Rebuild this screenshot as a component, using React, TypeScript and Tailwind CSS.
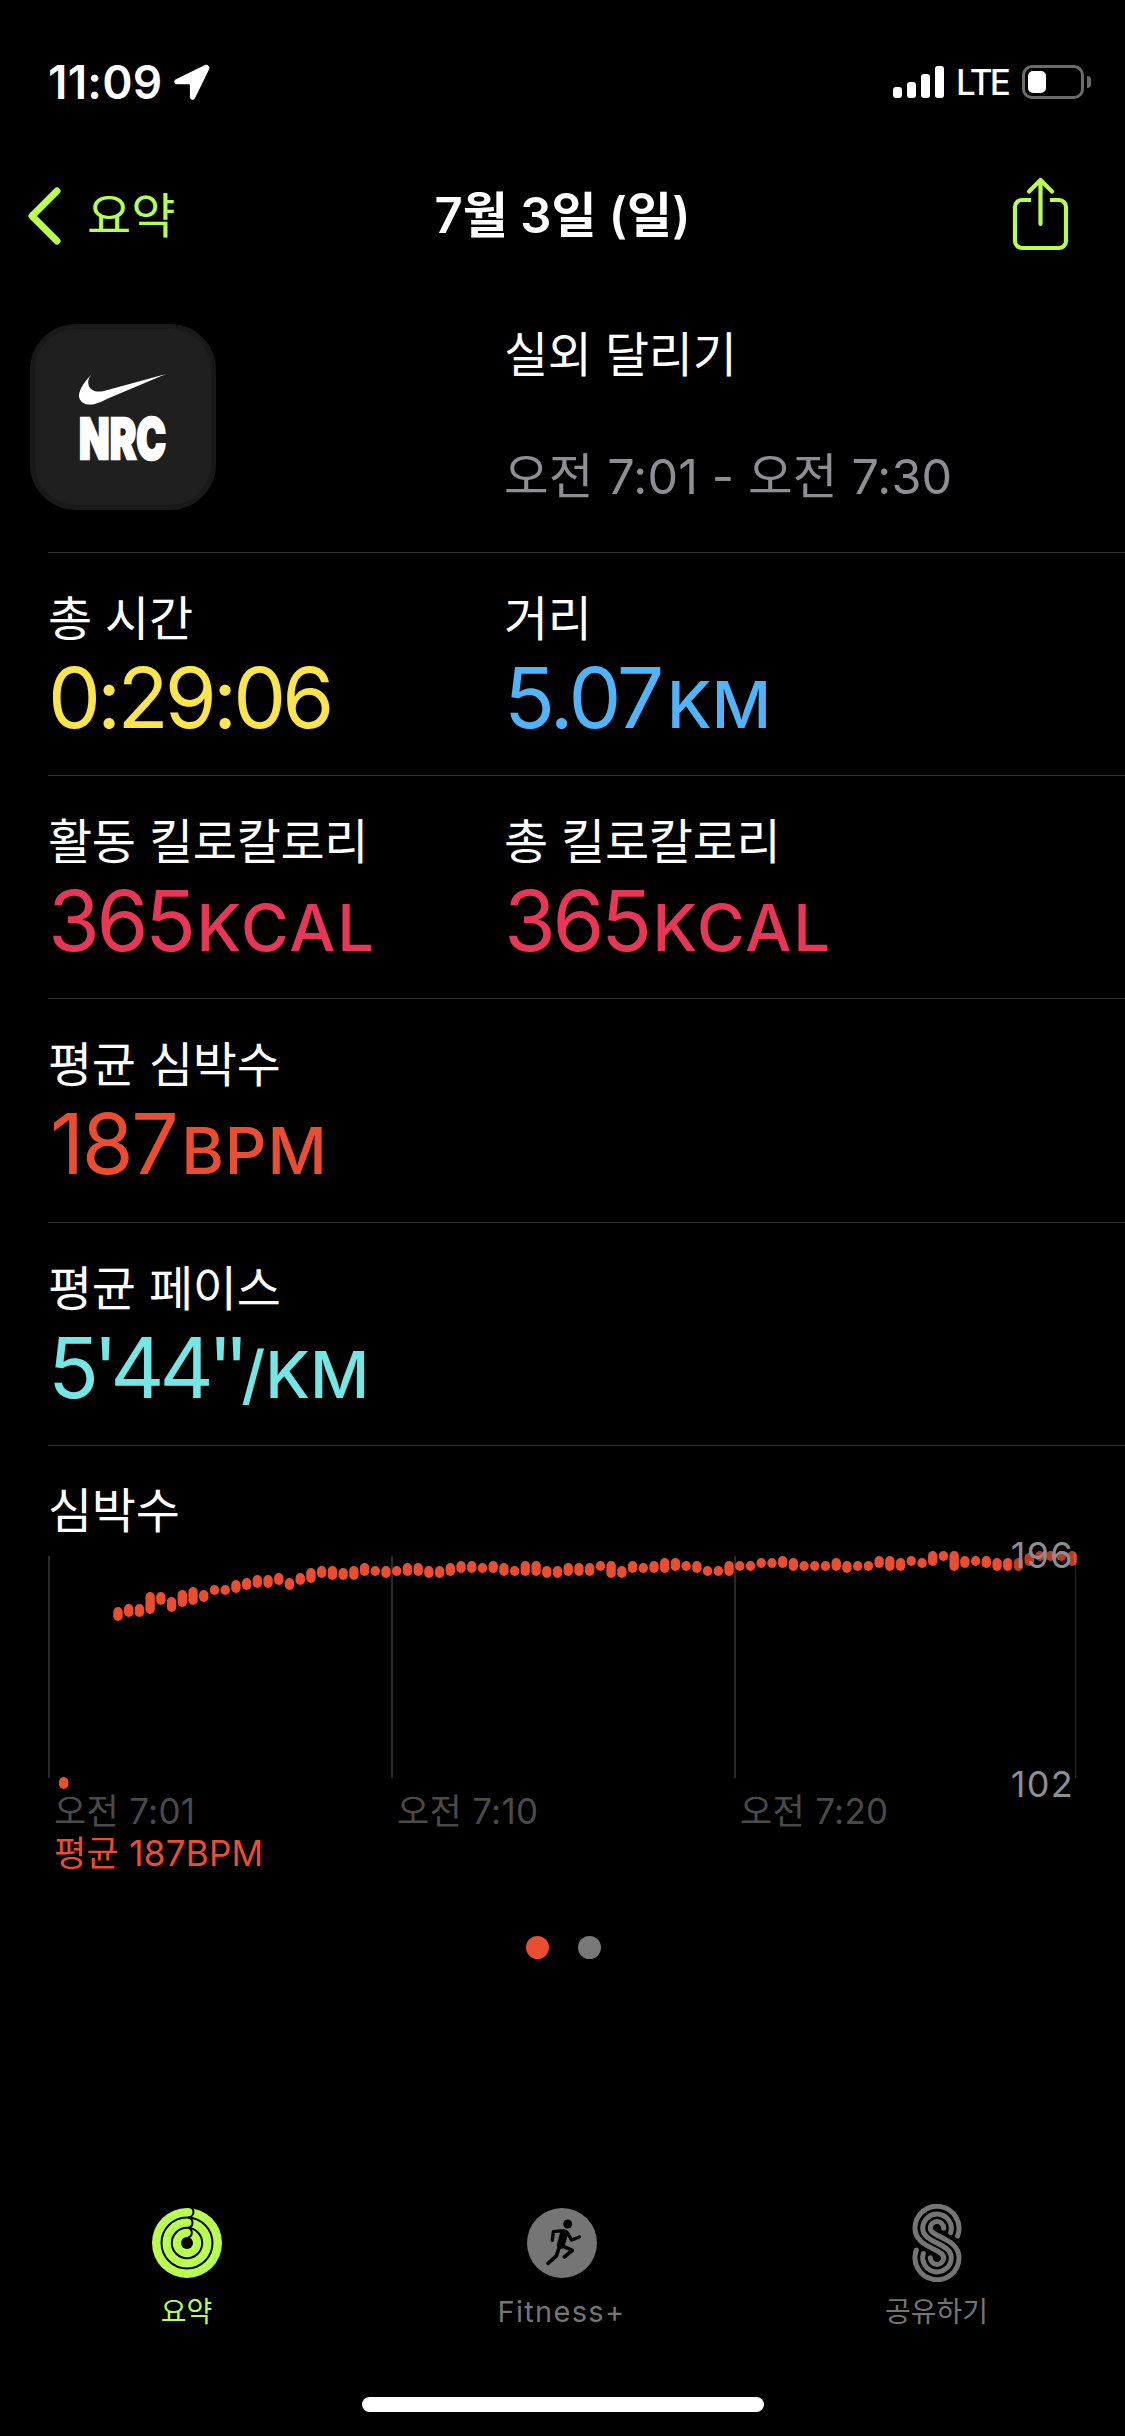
import React from 'react';

type Metric = { label: string; value: string; valueClass: string; unit?: string; unitClass?: string };

const rows: Metric[][] = [
  [
    { label: '총 시간', value: '0:29:06', valueClass: 'tracking-[-3.9px] text-[#fae54f]' },
    { label: '거리', value: '5.07', valueClass: 'tracking-[-3.2px] text-[#51b4fb]', unit: 'KM', unitClass: 'ml-[6px] tracking-normal' },
  ],
  [
    { label: '활동 킬로칼로리', value: '365', valueClass: 'tracking-[-3.5px] text-[#e73656]', unit: 'KCAL', unitClass: 'ml-1 tracking-[2px]' },
    { label: '총 킬로칼로리', value: '365', valueClass: 'tracking-[-3.5px] text-[#e73656]', unit: 'KCAL', unitClass: 'ml-1 tracking-[2px]' },
  ],
  [{ label: '평균 심박수', value: '187', valueClass: 'pl-[2px] tracking-[-2.5px] text-[#eb4d31]', unit: 'BPM', unitClass: 'ml-[5px] tracking-[1px]' }],
  [{ label: '평균 페이스', value: "5'44''", valueClass: 'tracking-[-5px] text-[#75e6e3]', unit: '/KM', unitClass: 'tracking-normal' }],
];

// [top, height] of each heart rate sample, in chart units
const samples: [number, number][] = [
  [51, 14], [48, 13], [48, 13], [36, 22], [36, 13], [41, 15], [34, 17], [31, 18], [34, 12], [29, 10],
  [29, 10], [24, 13], [22, 12], [19, 13], [19, 13], [17, 12], [22, 12], [17, 12], [12, 15], [10, 12],
  [10, 14], [12, 12], [10, 14], [7, 13], [10, 10], [10, 12], [10, 10], [7, 13], [7, 13], [10, 12],
  [10, 12], [7, 13], [5, 12], [5, 12], [7, 10], [5, 12], [7, 13], [10, 10], [5, 15], [5, 15],
  [10, 12], [10, 12], [7, 13], [7, 13], [7, 13], [5, 10], [5, 17], [10, 12], [5, 12], [7, 10],
  [5, 12], [2, 15], [2, 13], [5, 10], [5, 12], [10, 10], [10, 10], [5, 15], [5, 10], [5, 10],
  [2, 10], [2, 10], [0, 12], [2, 13], [5, 10], [5, 10], [5, 10], [2, 13], [5, 12], [5, 10],
  [5, 10], [0, 12], [0, 15], [2, 13], [0, 10], [2, 10], [-5, 15], [-5, 10], [-5, 20], [0, 12],
  [0, 10], [0, 12], [2, 13], [2, 13], [2, 13], [-3, 13], [-5, 10], [-5, 10], [-5, 10], [-5, 15],
];

const StatusBar: React.FC = () => (
  <div className="flex h-[164px] items-start justify-between pt-[57px] pr-[34px] pl-[48px]">
    <div className="flex h-[50px] items-center">
      <span className="w-[126px] text-[46px] leading-[50px] font-semibold tracking-[0.2px]">11:09</span>
      <svg width="36" height="36" viewBox="0 0 36 36" fill="white">
        <path d="M30.5 1.2 2 15.3C-.8 16.8 0 20.3 3 20.3h12.3c.4 0 .6.2.6.6V33c0 3.2 3.9 3.8 5.2 1L35 5.6c1.4-3-1.6-5.8-4.5-4.4Z" />
      </svg>
    </div>
    <div className="flex h-[50px] items-center">
      <div className="flex h-8 items-end gap-[5px]">
        <div className="h-[11px] w-[9px] rounded-[3px] bg-white" />
        <div className="h-4 w-[9px] rounded-[3px] bg-white" />
        <div className="h-6 w-[9px] rounded-[3px] bg-white" />
        <div className="h-8 w-[9px] rounded-[3px] bg-white" />
      </div>
      <span className="ml-3 w-[66px] text-[35px] leading-[50px] font-medium tracking-[-2.8px]">LTE</span>
      <div className="flex h-[34px] w-[62px] items-center rounded-[10px] border-[3px] border-[#6c6c6c] pl-[3px]">
        <div className="h-[22px] w-[18px] rounded-[5px] bg-white" />
      </div>
      <div className="ml-[3px] h-3 w-1 rounded-r-full bg-[#6c6c6c]" />
    </div>
  </div>
);

const NavBar: React.FC = () => (
  <div className="grid h-[104px] grid-cols-3 items-center">
    <a href="#" className="flex items-center text-[#b9fd50]">
      <svg className="ml-[27px]" width="36" height="60" viewBox="0 0 36 60" fill="none" stroke="currentColor" strokeWidth="7" strokeLinecap="round" strokeLinejoin="round">
        <path d="M30 5 5 30l25 25" />
      </svg>
      <span className="ml-[24px] text-[48px] leading-[60px]">요약</span>
    </a>
    <h1 className="text-center text-[49px] leading-[60px] font-semibold whitespace-nowrap">7월 3일 (일)</h1>
    <button className="mr-[54px] mb-[5px] justify-self-end text-[#b9fd50]">
      <svg width="62" height="76" viewBox="0 0 62 76" fill="none" stroke="currentColor" strokeWidth="4.2" strokeLinecap="round" strokeLinejoin="round">
        <path d="M22 24h-9a7 7 0 0 0-7 7v34a7 7 0 0 0 7 7h37a7 7 0 0 0 7-7V31a7 7 0 0 0-7-7h-9" strokeLinecap="butt" />
        <path d="M31.5 48V4M20 15.5 31.5 4 43 15.5" />
      </svg>
    </button>
  </div>
);

const AppIcon: React.FC = () => (
  <div className="ml-[30px] h-[186px] w-[186px] overflow-hidden rounded-[46px] border-[5px] border-[#191919] bg-[#1f1f1f]">
    <svg width="176" height="176" viewBox="35 329 176 176" fill="white">
      <path d="M91.8 374C86 380 79 389 79 395.5c0 5.5 4.500 9.100 10.500 9.100 6.500 0 11.500-2.600 18.500-6.100L166 374l-62 17c-11 2.500-16.500-3-15.700-10 .4-3 1.700-4.500 3.500-7Z" />
      <text x="79" y="459" textLength="87" lengthAdjust="spacingAndGlyphs" className="font-['Inter'] text-[57px] font-black" stroke="white" strokeWidth="2.5">
        NRC
      </text>
    </svg>
  </div>
);

const WorkoutHeader: React.FC = () => (
  <div className="flex h-[284px] pt-14">
    <div className="w-[504px]">
      <AppIcon />
    </div>
    <div className="mt-px text-[48px] leading-[60px]">
      <div className="tracking-[-0.3px]">실외 달리기</div>
      <div className="mt-[62px] text-[48.5px] tracking-[0.15px] text-[#8e8e93]">오전 7:01 - 오전 7:30</div>
    </div>
  </div>
);

// Minute and second marks sit closer to the digits than the font sets them
const MetricValue: React.FC<{ value: string }> = ({ value }) => (
  <>
    {value.split(/(')/).map((part, i) =>
      part === "'" ? (
        <span key={i} className="-ml-[1px] tracking-[-8px]">
          {part}
        </span>
      ) : (
        part
      )
    )}
  </>
);

const MetricCell: React.FC<{ metric: Metric }> = ({ metric }) => (
  <div className="w-[456px]">
    <div className="text-[48px] leading-[60px] tracking-[-0.3px]">{metric.label}</div>
    <div className={`mt-[6px] text-[84px] leading-[85px] whitespace-nowrap ${metric.valueClass}`}>
      <MetricValue value={metric.value} />
      {metric.unit && <span className={`text-[65px] font-medium ${metric.unitClass}`}>{metric.unit}</span>}
    </div>
  </div>
);

const HeartRateChart: React.FC = () => (
  <div className="ml-12 h-[491px] border-t border-[#333] pt-[35px]">
    <div className="text-[48px] leading-[60px] tracking-[-0.3px]">심박수</div>
    <div className="relative mt-[15px] w-[1028px]">
      <svg className="block overflow-visible" width="1028" height="222">
        <path d="M1 0v222M344 0v222M687 0v222" stroke="#2a2a2a" strokeWidth="2" />
        <path d="M1027.5 0v222" stroke="#2a2a2a" />
        <g fill="#eb4d31">
          <rect x="11" y="221" width="9.4" height="12" rx="4.7" />
          {samples.map(([top, height], i) => (
            <rect key={i} x={65.3 + i * 10.72} y={top} width="9.4" height={height} rx="4.7" />
          ))}
        </g>
      </svg>
      <div className="absolute top-[-19px] right-[2px] bg-black/20 text-[36px] leading-[36px] tracking-[1.3px] text-[#8e8e93]">196</div>
      <div className="absolute top-[210px] right-[2px] text-[36px] leading-[36px] tracking-[1.3px] text-[#8e8e93]">102</div>
    </div>
    <div className="mt-3 grid grid-cols-[343px_343px_343px] pl-[6px] text-[35px] leading-[42px] tracking-[0.3px] text-[#4a4a4a]">
      <span>오전 7:01</span>
      <span>오전 7:10</span>
      <span>오전 7:20</span>
    </div>
    <div className="pl-[6px] text-[35px] leading-[42px] tracking-[0.3px] text-[#eb4d31]">평균 187BPM</div>
  </div>
);

const RingsIcon: React.FC = () => (
  <svg width="70" height="78" viewBox="-35 -39 70 78" fill="none" stroke="black" strokeWidth="2">
    <circle r="35" fill="currentColor" stroke="none" />
    <circle r="25.5" />
    <circle r="15.2" />
    <circle r="6" fill="black" stroke="none" />
    <path d="M1-36.5A5.4 5.4 0 0 1 1-25.5M1-25.5A5.2 5.2 0 0 1 1-15.2M1-15.2A5 5 0 0 1 1-5.5" />
  </svg>
);

const RunnerIcon: React.FC = () => (
  <svg width="70" height="78" viewBox="1217 72 210 234" fill="none" stroke="black" strokeLinecap="round" strokeLinejoin="round">
    <circle cx="1322" cy="189" r="105" fill="currentColor" stroke="none" />
    <circle cx="1339" cy="132" r="13.5" fill="black" stroke="none" />
    <path d="m1293 181 3-26 30-3" strokeWidth="10" />
    <path d="m1336 156 15 24 23-9" strokeWidth="10" />
    <path d="m1328 160-9 34" strokeWidth="24" />
    <path d="m1320 196 33 15-24 20" strokeWidth="11" />
    <path d="m1315 198-10 30-25 22" strokeWidth="11" />
  </svg>
);

const SharingIcon: React.FC = () => (
  <svg width="70" height="78" viewBox="-35 -39 70 78" fill="none" stroke="currentColor" strokeWidth="5" strokeLinecap="round">
    <path d="M20.6-7A22 22 0 1 0-22-14.7C-22 5 6.700 5.500 6.700 14.700A6.700 6.700 0 0 1-6.700 14.700" />
    <path d="M13.700-10.500A14.300 14.300 0 1 0-14.300-14.700C-14.300 0 14.300 0 14.300 14.700A14.300 14.300 0 1 1-13.700 10.500" />
    <path d="M6.700-14.700A6.700 6.700 0 0 0-6.700-14.700C-6.700-5.500 22-5 22 14.700A22 22 0 1 1-20.600 7" />
  </svg>
);

const TabBar: React.FC = () => (
  <nav className="-ml-px grid w-[1125px] grid-cols-3 text-center text-[28px] leading-[36px] text-[#757575]">
    <a href="#" className="flex flex-col items-center text-[#b9fd50]">
      <RingsIcon />
      <span className="mt-[12px]">요약</span>
    </a>
    <a href="#" className="flex flex-col items-center">
      <RunnerIcon />
      <span className="mt-[12px] text-[29px] tracking-[1.3px]">Fitness+</span>
    </a>
    <a href="#" className="flex flex-col items-center">
      <SharingIcon />
      <span className="mt-[12px]">공유하기</span>
    </a>
  </nav>
);

const App: React.FC = () => {
  return (
    <div className="h-[2436px] w-[1125px] overflow-hidden bg-black font-['Inter','Noto_Sans_CJK_KR',sans-serif] text-white">
      <StatusBar />
      <NavBar />
      <WorkoutHeader />

      {rows.map((row, i) => (
        <div key={i} className="ml-12 flex h-[223.2px] border-t border-[#333] pt-[36px]">
          {row.map((metric) => (
            <MetricCell key={metric.label} metric={metric} />
          ))}
        </div>
      ))}

      <HeartRateChart />

      {/* Page indicator */}
      <div className="flex h-[268px] justify-center gap-[29px] pl-[2px]">
        <div className="h-[23px] w-[23px] rounded-full bg-[#eb4d31]" />
        <div className="h-[23px] w-[23px] rounded-full bg-[#787878]" />
      </div>

      <TabBar />
      <div className="mx-auto mt-[67px] h-[15px] w-[402px] rounded-full bg-white" />
    </div>
  );
};

export default App;
